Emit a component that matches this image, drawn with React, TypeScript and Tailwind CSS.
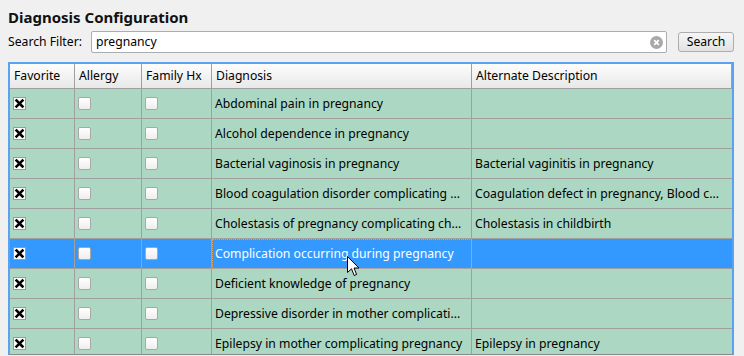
import React from 'react';

type Row = { diagnosis: string; alternate: string; selected?: boolean };

const rows: Row[] = [
  { diagnosis: 'Abdominal pain in pregnancy', alternate: '' },
  { diagnosis: 'Alcohol dependence in pregnancy', alternate: '' },
  { diagnosis: 'Bacterial vaginosis in pregnancy', alternate: 'Bacterial vaginitis in pregnancy' },
  { diagnosis: 'Blood coagulation disorder complicating ...', alternate: 'Coagulation defect in pregnancy, Blood c...' },
  { diagnosis: 'Cholestasis of pregnancy complicating ch...', alternate: 'Cholestasis in childbirth' },
  { diagnosis: 'Complication occurring during pregnancy', alternate: '', selected: true },
  { diagnosis: 'Deficient knowledge of pregnancy', alternate: '' },
  { diagnosis: 'Depressive disorder in mother complicati...', alternate: '' },
  { diagnosis: 'Epilepsy in mother complicating pregnancy', alternate: 'Epilepsy in pregnancy' },
];

const CheckedBox = () => (
  <svg width="13" height="13" viewBox="0 0 13 13">
    <rect x="0.5" y="0.5" width="12" height="12" fill="#ffffff" stroke="#9a9a9a" />
    <path d="M3.5 3.5 L9.5 9.5 M9.5 3.5 L3.5 9.5" stroke="#000000" strokeWidth="2.5" strokeLinecap="square" />
  </svg>
);

const EmptyBox = () => (
  <div className="w-[13px] h-[13px] rounded-[2px] border border-[#a8a8a8] bg-gradient-to-b from-[#ffffff] to-[#eeeeee]" />
);

const Cursor = () => (
  <svg className="absolute left-[347px] top-[256px] pointer-events-none" width="13" height="21" viewBox="0 0 13 21">
    <path d="M0.5 0.5 L0.5 16.5 L4.5 12.8 L7.2 19.5 L9.6 18.5 L7 12 L12 12 Z" fill="#ffffff" stroke="#000000" strokeWidth="1" strokeLinejoin="miter" />
  </svg>
);

const headerCell = 'h-[25px] pl-[4px] pt-[1px] flex items-center border-r border-b border-[#a0a0a0] bg-gradient-to-b from-[#fdfdfd] to-[#e8e8e8] text-black';

const App: React.FC = () => {
  return (
    <div className="relative w-[744px] h-[356px] overflow-hidden bg-[#f0f0f0] font-['Noto_Sans',sans-serif] text-[12.2px] text-black">
      <div className="pt-[5px] px-[8px]">
        <h1 className="h-[25px] leading-[25px] text-[15px] font-bold text-[#111111]">Diagnosis Configuration</h1>

        {/* search bar */}
        <div className="mt-[1px] h-[22px] flex items-center">
          <span className="w-[83px] shrink-0">Search Filter:</span>
          <div className="w-[576px] h-[22px] flex items-center border border-[#abadb3] rounded-[2px] bg-white pl-[4px] pr-[3px]">
            <span className="flex-1">pregnancy</span>
            <svg width="13" height="13" viewBox="0 0 13 13">
              <circle cx="6.5" cy="6.5" r="6.5" fill="#a9a9a9" />
              <path d="M4.2 4.2 L8.8 8.8 M8.8 4.2 L4.2 8.8" stroke="#ffffff" strokeWidth="1.8" />
            </svg>
          </div>
          <button className="ml-[11px] w-[56px] h-[20px] flex items-center justify-center border border-[#adadad] rounded-[3px] bg-gradient-to-b from-[#f6f6f6] to-[#e2e2e2] text-black">
            Search
          </button>
        </div>
      </div>

      {/* diagnosis table */}
      <div className="mt-[9px] ml-[8px] w-[726px] h-[293px] overflow-hidden border-t-2 border-x-2 border-[#5aa2f2] border-b border-b-[#8a8a8a]">
        <div className="grid grid-cols-[65px_67px_70px_260px_260px]">
          <div className={headerCell}>Favorite</div>
          <div className={headerCell}>Allergy</div>
          <div className={headerCell}>Family Hx</div>
          <div className={headerCell}>Diagnosis</div>
          <div className={headerCell}>Alternate Description</div>

          {rows.map((row) => {
            const bg = row.selected ? 'bg-[#3399ff] text-white' : 'bg-[#acd8c3] text-black';
            const cell = `h-[30px] flex items-center border-b border-[#a0a0a0] ${bg}`;
            return (
              <React.Fragment key={row.diagnosis}>
                <div className={`${cell} border-r pl-[3px]`}>
                  <CheckedBox />
                </div>
                <div className={`${cell} border-r pl-[3px]`}>
                  <EmptyBox />
                </div>
                <div className={`${cell} border-r pl-[3px]`}>
                  <EmptyBox />
                </div>
                <div
                  className={`${cell} border-r pl-[3px] pt-[2px] whitespace-nowrap overflow-hidden ${
                    row.selected ? 'outline-1 outline-dotted outline-[#e0a060] -outline-offset-1' : ''
                  }`}
                >
                  {row.diagnosis}
                </div>
                <div className={`${cell} pl-[3px] pt-[2px] whitespace-nowrap overflow-hidden`}>{row.alternate}</div>
              </React.Fragment>
            );
          })}
        </div>
      </div>

      <Cursor />
    </div>
  );
};

export default App;
